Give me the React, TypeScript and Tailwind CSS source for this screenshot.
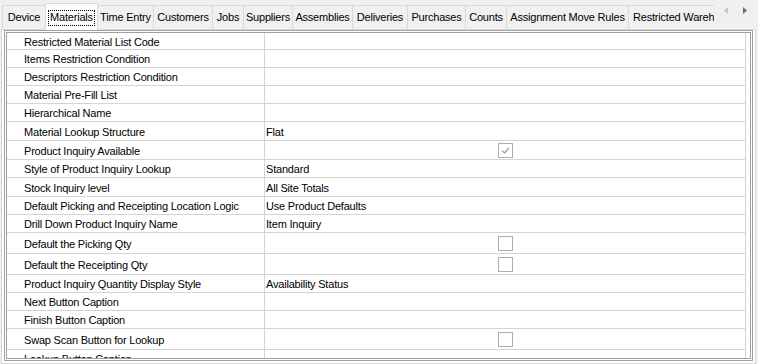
import React from 'react';

type Row = { label: string; value?: string; check?: 'on' | 'off'; h: string };

const rows: Row[] = [
  { label: 'Restricted Material List Code', h: 'h-[17px]' },
  { label: 'Items Restriction Condition', h: 'h-[18px]' },
  { label: 'Descriptors Restriction Condition', h: 'h-[18px]' },
  { label: 'Material Pre-Fill List', h: 'h-[18px]' },
  { label: 'Hierarchical Name', h: 'h-[18px]' },
  { label: 'Material Lookup Structure', value: 'Flat', h: 'h-[19px]' },
  { label: 'Product Inquiry Available', check: 'on', h: 'h-[19px]' },
  { label: 'Style of Product Inquiry Lookup', value: 'Standard', h: 'h-[18px]' },
  { label: 'Stock Inquiry level', value: 'All Site Totals', h: 'h-[19px]' },
  { label: 'Default Picking and Receipting Location Logic', value: 'Use Product Defaults', h: 'h-[18px]' },
  { label: 'Drill Down Product Inquiry Name', value: 'Item Inquiry', h: 'h-[18px]' },
  { label: 'Default the Picking Qty', check: 'off', h: 'h-[21px]' },
  { label: 'Default the Receipting Qty', check: 'off', h: 'h-[21px]' },
  { label: 'Product Inquiry Quantity Display Style', value: 'Availability Status', h: 'h-[18px]' },
  { label: 'Next Button Caption', h: 'h-[18px]' },
  { label: 'Finish Button Caption', h: 'h-[18px]' },
  { label: 'Swap Scan Button for Lookup', check: 'off', h: 'h-[21px]' },
  { label: 'Lookup Button Caption', h: 'h-[18px]' },
];

type Tab = { label: string; w: string; selected?: boolean };
const tabs: Tab[] = [
  { label: 'Device', w: 'w-[44px]' },
  { label: 'Materials', w: 'w-[53px]', selected: true },
  { label: 'Time Entry', w: 'w-[57px]' },
  { label: 'Customers', w: 'w-[60px]' },
  { label: 'Jobs', w: 'w-[32px]' },
  { label: 'Suppliers', w: 'w-[50px]' },
  { label: 'Assemblies', w: 'w-[61px]' },
  { label: 'Deliveries', w: 'w-[56px]' },
  { label: 'Purchases', w: 'w-[59px]' },
  { label: 'Counts', w: 'w-[42px]' },
  { label: 'Assignment Move Rules', w: 'w-[123px]' },
  { label: 'Restricted Warehouses', w: 'w-[120px]' },
];

function CheckBox({ on }: { on: boolean }) {
  return (
    <div className="w-[15px] h-[15px] border border-[#adadad] bg-white flex items-center justify-center">
      {on && (
        <svg width="11" height="11" viewBox="0 0 11 11">
          <path d="M2 5.6 L4.5 8 L9 3" fill="none" stroke="#9a9a9a" strokeWidth="1.2" />
        </svg>
      )}
    </div>
  );
}

export default function App() {
  return (
    <div className="w-[758px] h-[364px] bg-[#f0f0f0] overflow-hidden font-['Liberation_Sans',Arial,sans-serif] text-[11px] tracking-[-0.2px] text-black leading-none">
      <div className="relative z-10 flex h-[30px]">
        <div className="flex items-end w-[714px] overflow-hidden pl-[2px]">
          {tabs.map((t, i) =>
            t.selected ? (
              <div
                key={t.label}
                className={`${t.w} shrink-0 h-[27px] -ml-px relative z-10 bg-white border border-b-0 border-[#d9d9d9] flex items-start justify-center pt-[6px]`}
              >
                <span className="border border-dotted border-black px-[1px] pt-[1px] pb-[2px]">{t.label}</span>
              </div>
            ) : (
              <div
                key={t.label}
                className={`${t.w} shrink-0 h-[24px] mb-[1px] ${i === 0 ? '' : '-ml-px'} bg-[#f0f0f0] border border-b-0 border-[#d9d9d9] flex items-center justify-center whitespace-nowrap overflow-hidden`}
              >
                <span className={i === tabs.length - 1 ? 'pl-[4px] self-center w-full' : ''}>{t.label}</span>
              </div>
            )
          )}
        </div>
        <div className="flex-1 flex items-start pt-[7px] pl-[10px] gap-[15px]">
          <svg width="4" height="7" viewBox="0 0 4 7">
            <path d="M4 0 L0 3.5 L4 7 Z" fill="#c4c4c4" />
          </svg>
          <svg width="4" height="7" viewBox="0 0 4 7">
            <path d="M0 0 L4 3.5 L0 7 Z" fill="#6d6d6d" />
          </svg>
        </div>
      </div>
      <div className="-mt-px ml-[1px] w-[755px] h-[335px] border border-[#d9d9d9] bg-white px-[2px] pb-[2px]">
        <div className="h-full border border-[#a0a0a0] bg-white p-px">
          <div className="h-full border border-[#a0a0a0] bg-white overflow-hidden">
            <div className="w-[739px]">
              {rows.map((r) => (
                <div key={r.label} className={`flex ${r.h} border-b border-[#d4d4d4]`}>
                  <div className="w-[258px] shrink-0 border-r border-[#d4d4d4] pl-[17px] pt-[2px] flex items-center whitespace-nowrap">
                    {r.label}
                  </div>
                  <div
                    className={`w-[481px] shrink-0 border-r border-[#d4d4d4] flex items-center whitespace-nowrap ${
                      r.check ? 'justify-center' : 'pl-[1px] pt-[2px]'
                    }`}
                  >
                    {r.check ? <CheckBox on={r.check === 'on'} /> : r.value}
                  </div>
                </div>
              ))}
            </div>
          </div>
        </div>
      </div>
    </div>
  );
}
